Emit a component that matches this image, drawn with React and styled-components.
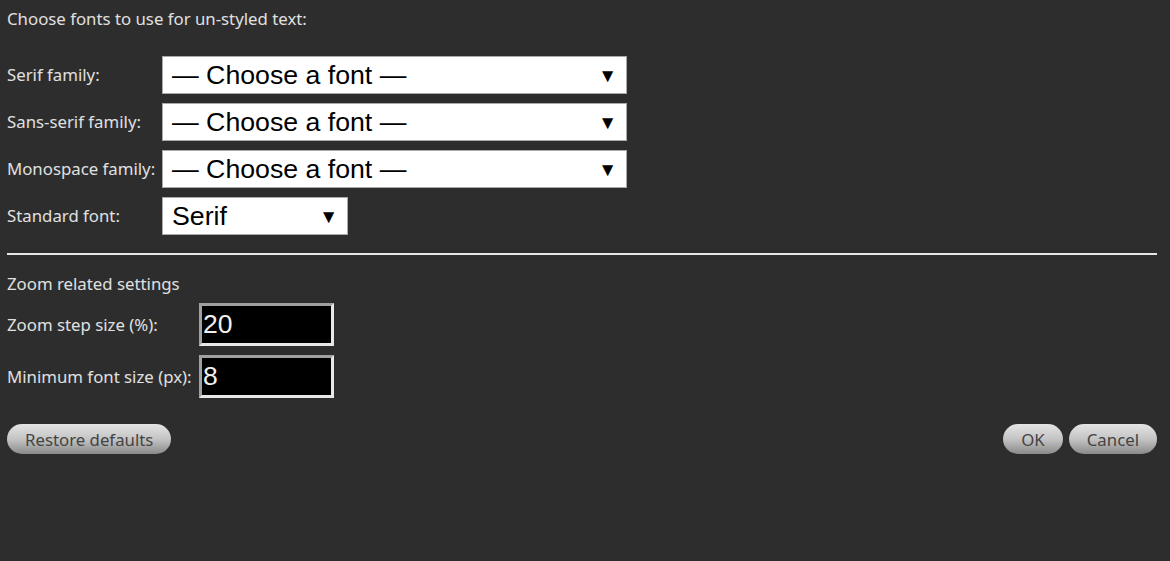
import React from 'react';
import styled, { createGlobalStyle } from 'styled-components';

const GlobalStyle = createGlobalStyle`
  html, body {
    margin: 0;
    padding: 0;
    background: #2d2d2d;
  }
  body {
    font-family: "Noto Sans", "Open Sans", sans-serif;
    color: #e0e0e0;
  }
`;

const Page = styled.div`
  width: 1170px;
  min-height: 561px;
  padding: 0 13px 0 7px;
  box-sizing: border-box;
  display: flex;
  flex-direction: column;
`;

const Heading = styled.div`
  font-size: 16.8px;
  line-height: 22px;
  margin-top: 8px;
`;

const FormGrid = styled.div`
  display: grid;
  grid-template-columns: ${p => p.labelWidth}px auto;
  row-gap: ${p => p.gap}px;
  align-items: center;
  justify-items: start;
  margin-top: ${p => p.top}px;
`;

const Label = styled.div`
  font-size: 16.8px;
  line-height: 22px;
  white-space: nowrap;
`;

const SelectBox = styled.div`
  width: ${p => p.width}px;
  height: 38px;
  box-sizing: border-box;
  background: #fff;
  border: 1px solid #a9a9a9;
  display: flex;
  align-items: center;
  justify-content: space-between;
  padding: 0 9px 0 9px;
  font-family: "Liberation Sans", Arial, sans-serif;
  font-size: 26.7px;
  color: #000;
`;

const Arrow = styled.span`
  font-size: 19px;
  line-height: 1;
`;

const Rule = styled.div`
  height: 2px;
  background: #e6e6e6;
  margin-top: 18px;
`;

const SubHeading = styled.div`
  font-size: 16.8px;
  line-height: 22px;
  margin-top: 18px;
`;

const NumberInput = styled.div`
  width: 135px;
  height: 43px;
  box-sizing: border-box;
  background: #000;
  border: 3px solid;
  border-color: #a0a0a0 #e8e8e8 #e8e8e8 #a0a0a0;
  display: flex;
  align-items: center;
  padding-left: 1px;
  font-family: "Liberation Sans", Arial, sans-serif;
  font-size: 26.5px;
  color: #f0f0f0;
`;

const ButtonBar = styled.div`
  display: flex;
  justify-content: space-between;
  margin-top: 26px;
`;

const ButtonGroup = styled.div`
  display: flex;
  gap: 6px;
`;

const Button = styled.button`
  height: 30px;
  border: none;
  border-radius: 15px;
  padding: 0 ${p => p.pad}px;
  background: linear-gradient(to bottom, #e4e4e4 0%, #c4c4c4 50%, #8a8a8a 100%);
  font-family: "Noto Sans", "Open Sans", sans-serif;
  font-size: 16.8px;
  color: #444;
  cursor: pointer;
`;

const fontRows = [
  { label: 'Serif family:', value: '— Choose a font —', width: 465 },
  { label: 'Sans-serif family:', value: '— Choose a font —', width: 465 },
  { label: 'Monospace family:', value: '— Choose a font —', width: 465 },
  { label: 'Standard font:', value: 'Serif', width: 186 },
];

const zoomRows = [
  { label: 'Zoom step size (%):', value: '20' },
  { label: 'Minimum font size (px):', value: '8' },
];

export default function App() {
  return (
    <Page>
      <GlobalStyle />
      <Heading>Choose fonts to use for un-styled text:</Heading>
      <FormGrid labelWidth={155} gap={9} top={26}>
        {fontRows.map((row, i) => (
          <React.Fragment key={i}>
            <Label>{row.label}</Label>
            <SelectBox width={row.width}>
              <span>{row.value}</span>
              <Arrow>▼</Arrow>
            </SelectBox>
          </React.Fragment>
        ))}
      </FormGrid>
      <Rule />
      <SubHeading>Zoom related settings</SubHeading>
      <FormGrid labelWidth={192} gap={9} top={8}>
        {zoomRows.map((row, i) => (
          <React.Fragment key={i}>
            <Label>{row.label}</Label>
            <NumberInput>{row.value}</NumberInput>
          </React.Fragment>
        ))}
      </FormGrid>
      <ButtonBar>
        <Button pad={18}>Restore defaults</Button>
        <ButtonGroup>
          <Button pad={18}>OK</Button>
          <Button pad={18}>Cancel</Button>
        </ButtonGroup>
      </ButtonBar>
    </Page>
  );
}
